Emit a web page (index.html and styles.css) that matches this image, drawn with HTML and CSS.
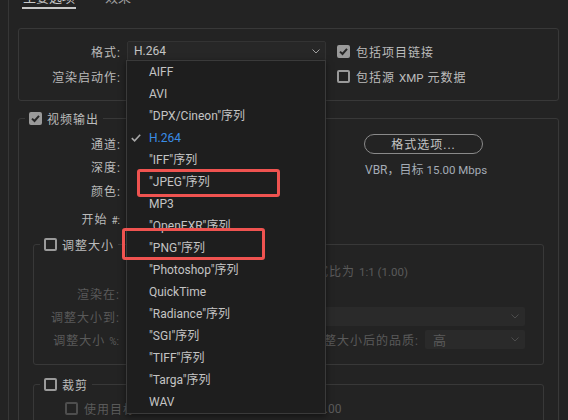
FILE: index.html
```html
<!DOCTYPE html>
<html lang="zh-CN">
<head>
    <meta charset="UTF-8">
    <meta name="viewport" content="width=device-width, initial-scale=1.0">
    <title>导出设置</title>
    <link rel="stylesheet" href="styles.css">
</head>
<body>
    <div class="panel">
        <div class="tabs">
            <span class="tab active">主要选项</span>
            <span class="tab">效果</span>
        </div>

        <div class="output-box">
            <div class="label">格式:</div>
            <div class="select-wrap">
                <div class="select">
                    <span>H.264</span>
                    <svg class="chev" width="8" height="5" viewBox="0 0 8 5"><path d="M0.5 0.5 L4 4 L7.5 0.5" fill="none" stroke="#a0a0a0" stroke-width="1"/></svg>
                </div>
                <ul class="menu">
                    <li>AIFF</li>
                    <li>AVI</li>
                    <li>"DPX/Cineon"序列</li>
                    <li class="selected">
                        <svg class="tick" width="10" height="8" viewBox="0 0 10 8"><path d="M0.8 4.2 L3.6 6.8 L9.2 0.8" fill="none" stroke="#a8a8a8" stroke-width="1.6"/></svg>
                        H.264
                    </li>
                    <li>"IFF"序列</li>
                    <li>"JPEG"序列</li>
                    <li>MP3</li>
                    <li>"OpenEXR"序列</li>
                    <li>"PNG"序列</li>
                    <li>"Photoshop"序列</li>
                    <li>QuickTime</li>
                    <li>"Radiance"序列</li>
                    <li>"SGI"序列</li>
                    <li>"TIFF"序列</li>
                    <li>"Targa"序列</li>
                    <li>WAV</li>
                </ul>
            </div>
            <label class="check">
                <span class="cb on"><svg width="9" height="9" viewBox="0 0 9 9"><path d="M1 4.6 L3.5 7 L8 1.8" fill="none" stroke="#262626" stroke-width="2"/></svg></span>
                <span>包括项目链接</span>
            </label>

            <div class="label">渲染启动作:</div>
            <div></div>
            <label class="check">
                <span class="cb"></span>
                <span>包括源 <span class="latin">XMP</span> 元数据</span>
            </label>
        </div>

        <fieldset class="group">
            <legend>
                <span class="cb on"><svg width="9" height="9" viewBox="0 0 9 9"><path d="M1 4.6 L3.5 7 L8 1.8" fill="none" stroke="#262626" stroke-width="2"/></svg></span>
                <span>视频输出</span>
            </legend>

            <div class="video-grid">
                <div class="label r1">通道:</div>
                <div class="label r2">深度:</div>
                <div class="label r3">颜色:</div>
                <div class="label r4">开始 <small>#:</small></div>
                <button class="pill">格式选项...</button>
                <div class="rate">VBR，目标 <span class="latin">15.00 Mbps</span></div>
            </div>

            <fieldset class="group sub">
                <legend>
                    <span class="cb"></span>
                    <span>调整大小</span>
                </legend>
                <div class="resize-grid">
                    <div></div>
                    <div class="note">像素长宽比为 <span class="latin">1:1 (1.00)</span></div>

                    <div class="label dim">渲染在:</div>
                    <div></div>

                    <div class="label dim">调整大小到:</div>
                    <div class="field"><svg class="chev" width="8" height="5" viewBox="0 0 8 5"><path d="M0.5 0.5 L4 4 L7.5 0.5" fill="none" stroke="#4c4c4c" stroke-width="1"/></svg></div>

                    <div class="label dim">调整大小 <small>%:</small></div>
                    <div class="quality">
                        <span class="label dim">调整大小后的品质:</span>
                        <div class="field short">
                            <span>高</span>
                            <svg class="chev" width="8" height="5" viewBox="0 0 8 5"><path d="M0.5 0.5 L4 4 L7.5 0.5" fill="none" stroke="#4c4c4c" stroke-width="1"/></svg>
                        </div>
                    </div>
                </div>
            </fieldset>

            <fieldset class="group sub crop">
                <legend>
                    <span class="cb"></span>
                    <span>裁剪</span>
                </legend>
                <div class="crop-row">
                    <label class="check dim">
                        <span class="cb"></span>
                        <span>使用目标</span>
                    </label>
                    <span class="note-val">1.00</span>
                </div>
            </fieldset>
        </fieldset>
    </div>

    <div class="mark mark-jpeg"></div>
    <div class="mark mark-png"></div>
</body>
</html>
```

FILE: styles.css
```css
* {
    box-sizing: border-box;
}
body {
    margin: 0;
    height: 420px;
    overflow: hidden;
    position: relative;
    background: #232323;
    color: #b9b9b9;
    font-family: Roboto, "Noto Sans CJK SC", sans-serif;
    font-size: 12px;
}
.panel {
    display: flow-root;
    width: 560px;
    height: 420px;
    margin-left: 8px;
    padding: 0 9px;
    border-left: 1px solid #363636;
}
.latin {
    letter-spacing: 0;
    font-size: 11.5px;
}

/* tabs */
.tabs {
    display: flex;
    gap: 29px;
    margin: -10px 0 0 4px;
}
.tab {
    font-size: 13px;
    line-height: 16px;
    padding-bottom: 1px;
    border-bottom: 2px solid transparent;
    color: #9a9a9a;
}
.tab.active {
    width: 54px;
    text-align: center;
    color: #c8c8c8;
    border-bottom-color: #c8c8c8;
}

/* format box */
.output-box {
    margin-top: 19px;
    display: grid;
    grid-template-columns: 102px 199px auto;
    grid-template-rows: 20px 20px;
    column-gap: 6px;
    row-gap: 5px;
    align-items: center;
    padding: 12px 0 14px;
    border: 1px solid #383838;
    border-radius: 3px;
}
.label {
    text-align: right;
    letter-spacing: 1px;
    white-space: nowrap;
    color: #bababa;
}
.label small {
    font-size: 10px;
    letter-spacing: 0;
    margin-right: 1px;
}
.label.dim {
    color: #5a5a5a;
}
.select-wrap {
    position: relative;
    height: 20px;
}
.select {
    height: 20px;
    display: flex;
    align-items: center;
    justify-content: space-between;
    padding: 0 5px 0 6px;
    background: #272727;
    border: 1px solid #333;
    border-radius: 2px;
    color: #c4c4c4;
}
.check {
    display: flex;
    align-items: center;
    gap: 6px;
    margin-left: 5px;
    letter-spacing: 1px;
    white-space: nowrap;
    color: #bcbcbc;
}
.cb {
    flex: none;
    width: 13px;
    height: 13px;
    display: inline-flex;
    align-items: center;
    justify-content: center;
    border: 2px solid #9a9a9a;
    border-radius: 2px;
}
.cb.on {
    background: #9a9a9a;
}

/* dropdown list */
.menu {
    position: absolute;
    z-index: 5;
    top: 19px;
    left: -1px;
    width: 200px;
    margin: 0;
    padding: 0;
    list-style: none;
    background: #1e1e1e;
    border: 1px solid #3a3a3a;
    box-shadow: 0 2px 6px rgba(0, 0, 0, 0.5);
}
.menu li {
    position: relative;
    height: 22px;
    line-height: 22px;
    padding-left: 22px;
    white-space: nowrap;
    color: #c4c4c4;
}
.menu li.selected {
    color: #3a8de6;
}
.menu .tick {
    position: absolute;
    left: 4px;
    top: 7px;
}

/* groups */
.group {
    min-width: 0;
    margin: 10px 0 0;
    padding: 0 0 10px;
    border: 1px solid #383838;
    border-radius: 3px;
}
.group legend {
    display: flex;
    align-items: center;
    gap: 5px;
    height: 14px;
    margin-left: 6px;
    padding: 0 4px;
    letter-spacing: 1px;
    color: #bcbcbc;
}
.group.sub {
    margin: 4px 14px 0;
    padding: 0;
}
.group.crop {
    margin-top: 12px;
}

.video-grid {
    display: grid;
    grid-template-columns: 102px 243px 119px;
    grid-template-rows: 23px 23px 25px 30px;
    align-items: center;
    padding-top: 7px;
}
.video-grid .r1 { grid-row: 1; }
.video-grid .r2 { grid-row: 2; }
.video-grid .r3 { grid-row: 3; }
.video-grid .r4 { grid-row: 4; }
.pill {
    grid-column: 3;
    grid-row: 1;
    height: 20px;
    padding: 0;
    background: transparent;
    border: 1px solid #8a8a8a;
    border-radius: 10px;
    font: inherit;
    letter-spacing: 1px;
    color: #c4c4c4;
}
.rate {
    grid-column: 3 / span 2;
    grid-row: 2;
    align-self: end;
    line-height: 16px;
    padding-left: 1px;
    white-space: nowrap;
    color: #a4acb6;
}

/* resize */
.resize-grid {
    display: grid;
    grid-template-columns: 86px 1fr;
    grid-auto-rows: 23px;
    column-gap: 7px;
    align-items: center;
    padding: 8px 18px 13px 0;
}
.note {
    padding-left: 150px;
    letter-spacing: 1px;
    white-space: nowrap;
    color: #5a5a5a;
}
.field {
    height: 19px;
    display: flex;
    align-items: center;
    justify-content: flex-end;
    padding: 0 6px 0 8px;
    background: #2a2a2a;
    border-radius: 2px;
    color: #5a5a5a;
}
.field.short {
    width: 100px;
    justify-content: space-between;
    font-size: 13px;
}
.quality {
    display: flex;
    align-items: center;
    justify-content: flex-end;
    gap: 6px;
}

/* crop */
.crop-row {
    display: flex;
    align-items: center;
    padding: 9px 0 20px 31px;
}
.check.dim {
    width: 253px;
    margin-left: 0;
    color: #5a5a5a;
}
.check.dim .cb {
    border-color: #4e4e4e;
}
.note-val {
    color: #5a5a5a;
}

/* highlight frames */
.mark {
    position: absolute;
    z-index: 10;
    border: 3px solid #ef5350;
    border-radius: 3px;
}
.mark-jpeg {
    left: 137px;
    top: 169px;
    width: 143px;
    height: 28px;
}
.mark-png {
    left: 122px;
    top: 228px;
    width: 143px;
    height: 32px;
}
```
